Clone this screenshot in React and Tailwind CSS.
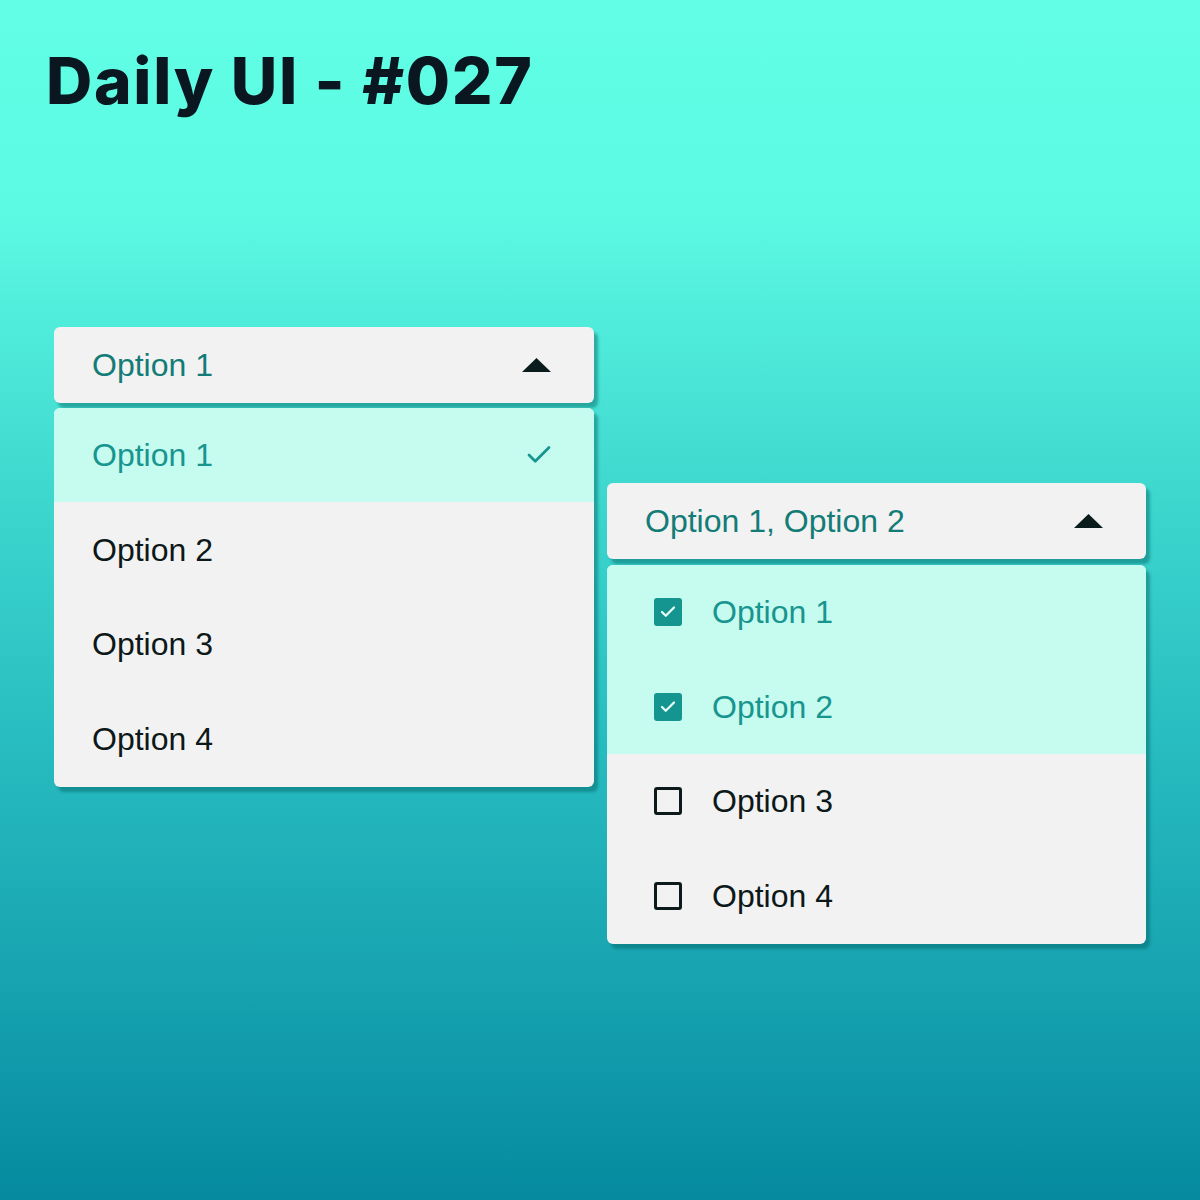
import { Check } from "lucide-react";

const single = ["Option 1", "Option 2", "Option 3", "Option 4"];
const multi = [
  { label: "Option 1", checked: true },
  { label: "Option 2", checked: true },
  { label: "Option 3", checked: false },
  { label: "Option 4", checked: false },
];

function Caret() {
  return (
    <svg width="29" height="14" viewBox="0 0 29 14" className="shrink-0">
      <path d="M14.5 0 L29 14 L0 14 Z" fill="#0b1c1d" />
    </svg>
  );
}

function Header({ text }) {
  return (
    <div className="flex h-[76px] items-center justify-between rounded-md bg-[#f2f2f2] pl-[38px] pr-[43px] shadow-[4px_5px_3px_rgba(0,95,95,0.45)]">
      <span className="text-[32px] text-[#137c77]">{text}</span>
      <Caret />
    </div>
  );
}

function Checkbox({ checked }) {
  if (checked) {
    return (
      <span className="flex h-[28px] w-[28px] items-center justify-center rounded-[3px] bg-[#15958f]">
        <Check size={18} strokeWidth={3} color="#e9fffb" />
      </span>
    );
  }
  return <span className="h-[28px] w-[28px] rounded-[3px] border-[3px] border-[#0d1a1b]" />;
}

export default function App() {
  return (
    <div
      className="min-h-[1200px] w-[1200px] bg-[linear-gradient(180deg,#62ffe6_0%,#5cf9e3_18%,#3fd9cf_40%,#27bcc0_62%,#17a3b0_82%,#058a9f_100%)]"
      style={{ fontFamily: '"Liberation Sans", Arial, sans-serif' }}
    >
      <h1
        className="pl-[46px] pt-[44px] text-[64px] font-extrabold leading-[1.15] tracking-[1.7px] text-[#0a1620]"
        style={{ fontFamily: "Inter, sans-serif" }}
      >
        Daily UI - #027
      </h1>

      <div className="mt-[209px] flex items-start gap-[13px] pl-[54px]">
        {/* single select */}
        <div className="flex w-[540px] flex-col gap-[5px]">
          <Header text="Option 1" />
          <div className="overflow-hidden rounded-md bg-[#f2f2f2] shadow-[4px_5px_3px_rgba(0,95,95,0.45)]">
            {single.map((o, i) => (
              <div
                key={o}
                className={`flex h-[94.75px] items-center justify-between pl-[38px] pr-[40px] text-[32px] ${
                  i === 0 ? "bg-[#c6fbf0] text-[#17958f]" : "text-[#0d1819]"
                }`}
              >
                <span>{o}</span>
                {i === 0 && <Check size={30} strokeWidth={2.2} color="#17958f" />}
              </div>
            ))}
          </div>
        </div>

        {/* multi select */}
        <div className="mt-[156px] flex w-[539px] flex-col gap-[6px]">
          <Header text="Option 1, Option 2" />
          <div className="overflow-hidden rounded-md bg-[#f2f2f2] shadow-[4px_5px_3px_rgba(0,95,95,0.45)]">
            {multi.map((o) => (
              <div
                key={o.label}
                className={`flex h-[94.75px] items-center gap-[30px] pl-[47px] text-[32px] ${
                  o.checked ? "bg-[#c6fbf0] text-[#17958f]" : "text-[#0d1819]"
                }`}
              >
                <Checkbox checked={o.checked} />
                <span>{o.label}</span>
              </div>
            ))}
          </div>
        </div>
      </div>
    </div>
  );
}
